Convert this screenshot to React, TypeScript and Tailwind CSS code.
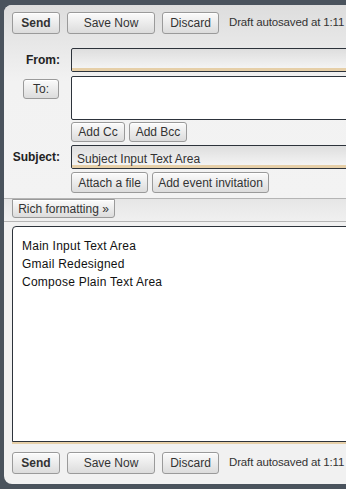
import React from 'react';

const font = { fontFamily: '"Liberation Sans", Arial, sans-serif' };

function Btn({ children, className = '', bold = false }: { children: React.ReactNode; className?: string; bold?: boolean }) {
  return (
    <button
      className={`flex shrink-0 items-center justify-center rounded-[3px] border border-[#9a9a9a] bg-gradient-to-b from-[#fbfbfb] to-[#dcdcdc] text-[12px] leading-none text-[#333] shadow-[inset_0_1px_0_#fff] whitespace-nowrap ${bold ? 'font-bold' : ''} ${className}`}
    >
      {children}
    </button>
  );
}

function Toolbar() {
  return (
    <div className="flex items-center h-[22px]">
      <Btn bold className="w-[48px] h-[22px]">Send</Btn>
      <Btn className="ml-[7px] w-[88px] h-[22px]">Save Now</Btn>
      <Btn className="ml-[7px] w-[57px] h-[22px]">Discard</Btn>
      <span className="ml-[10px] text-[11.5px] tracking-[-0.15px] text-[#333] whitespace-nowrap">Draft autosaved at 1:11</span>
    </div>
  );
}

function Field({ text }: { text?: string }) {
  return (
    <div className="relative h-[24px] w-[320px] shrink-0 rounded-l-[2px] border border-[#2d333b] bg-gradient-to-b from-[#dedede] to-[#f7f7f7] overflow-hidden">
      <div className="absolute left-0 right-0 bottom-0 h-[3px] bg-[#e6cfa8]" />
      {text && <span className="absolute left-[5px] top-[4px] text-[12px] text-[#333]">{text}</span>}
    </div>
  );
}

export default function App() {
  return (
    <div className="h-[489px] w-full overflow-hidden bg-[#4a535d] pl-[4px] pt-[5px]" style={font}>
      <div className="mr-[-60px] h-[479px] rounded-l-[8px] bg-[#f1f1f1] flex flex-col overflow-hidden">
        {/* compose header */}
        <div className="bg-gradient-to-b from-[#dddddd] via-[#f2f2f2] via-40% to-[#f3f3f3] pl-[8px] pt-[7px] h-[193px]">
          <Toolbar />
          <div className="mt-[14px] flex items-center">
            <div className="w-[48px] shrink-0 text-right text-[12px] font-bold text-[#222]">From:</div>
            <div className="ml-[11px] shrink-0"><Field /></div>
          </div>
          <div className="mt-[4px] flex items-start">
            <div className="w-[48px] shrink-0 flex justify-end">
              <Btn className="mt-[3px] w-[36px] h-[20px] mr-[1px]">To:</Btn>
            </div>
            <div className="ml-[11px] h-[44px] w-[320px] shrink-0 rounded-l-[2px] border border-[#2d333b] bg-white" />
          </div>
          <div className="mt-[2px] ml-[59px] flex gap-[4px]">
            <Btn className="w-[54px] h-[20px]">Add Cc</Btn>
            <Btn className="w-[58px] h-[20px]">Add Bcc</Btn>
          </div>
          <div className="mt-[3px] flex items-center">
            <div className="w-[48px] shrink-0 text-right text-[12px] font-bold text-[#222]">Subject:</div>
            <div className="ml-[11px] shrink-0"><Field text="Subject Input Text Area" /></div>
          </div>
          <div className="mt-[3px] ml-[59px] flex gap-[4px]">
            <Btn className="w-[77px] h-[21px]">Attach a file</Btn>
            <Btn className="w-[117px] h-[21px]">Add event invitation</Btn>
          </div>
        </div>
        {/* formatting bar */}
        <div className="h-[24px] border-t border-b border-[#b5b5b5] bg-gradient-to-b from-[#e6e6e6] to-[#f0f0f0] pl-[8px]">
          <Btn className="w-[103px] h-[19px] rounded-t-none">Rich formatting »</Btn>
        </div>
        {/* body */}
        <div className="pl-[8px] pt-[4px]">
          <div className="h-[216px] w-[380px] rounded-tl-[4px] border border-[#2d333b] bg-white pl-[9px] pt-[10px] text-[12px] leading-[18px] tracking-[0.25px] text-[#111] shadow-[0_2px_0_#e6cfa8]">
            <div>Main Input Text Area</div>
            <div>Gmail Redesigned</div>
            <div>Compose Plain Text Area</div>
          </div>
        </div>
        <div className="pl-[8px] mt-[10px]">
          <Toolbar />
        </div>
      </div>
    </div>
  );
}
